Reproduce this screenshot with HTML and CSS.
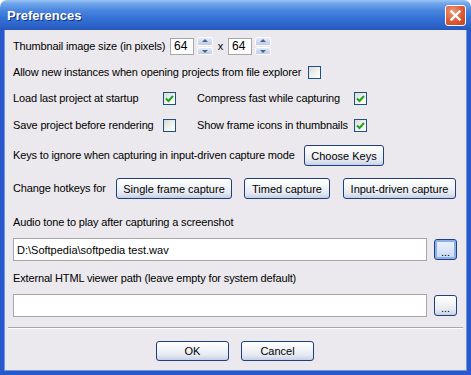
FILE: index.html
```html
<!DOCTYPE html>
<html lang="en">
<head>
    <meta charset="UTF-8">
    <title>Preferences</title>
    <link rel="stylesheet" href="styles.css">
</head>
<body>
    <div class="window">
        <div class="titlebar">
            <span class="title">Preferences</span>
            <span class="close">
                <svg width="11" height="11" viewBox="0 0 11 11"><path d="M1.5 1.5 L9.5 9.5 M9.5 1.5 L1.5 9.5" stroke="#fff" stroke-width="2.4" stroke-linecap="square"/></svg>
            </span>
        </div>

        <div class="content">
            <!-- thumbnail size -->
            <div class="row r1">
                <span class="lbl" style="width:157px">Thumbnail image size (in pixels)</span>
                <input class="num" type="text" value="64">
                <span class="spin"><span class="arr up"></span><span class="arr down"></span></span>
                <span class="times">x</span>
                <input class="num" type="text" value="64">
                <span class="spin"><span class="arr up"></span><span class="arr down"></span></span>
            </div>

            <div class="row r2">
                <span class="lbl" style="width:295px">Allow new instances when opening projects from file explorer</span>
                <span class="check"></span>
            </div>

            <div class="row r3">
                <span class="lbl" style="width:150px">Load last project at startup</span>
                <span class="check on"><svg width="9" height="8" viewBox="0 0 9 8"><path d="M1 3.5 L3.5 6 L8 1" fill="none" stroke="#21a121" stroke-width="2"/></svg></span>
                <span class="lbl" style="width:157px; margin-left:21px">Compress fast while capturing</span>
                <span class="check on"><svg width="9" height="8" viewBox="0 0 9 8"><path d="M1 3.5 L3.5 6 L8 1" fill="none" stroke="#21a121" stroke-width="2"/></svg></span>
            </div>

            <div class="row r3">
                <span class="lbl" style="width:150px">Save project before rendering</span>
                <span class="check"></span>
                <span class="lbl" style="width:157px; margin-left:21px">Show frame icons in thumbnails</span>
                <span class="check on"><svg width="9" height="8" viewBox="0 0 9 8"><path d="M1 3.5 L3.5 6 L8 1" fill="none" stroke="#21a121" stroke-width="2"/></svg></span>
            </div>

            <div class="row r5">
                <span class="lbl" style="width:291px">Keys to ignore when capturing in input-driven capture mode</span>
                <button class="btn" style="width:80px">Choose Keys</button>
            </div>

            <div class="row r5">
                <span class="lbl" style="width:103px">Change hotkeys for</span>
                <button class="btn" style="width:116px">Single frame capture</button>
                <button class="btn gap12" style="width:86px">Timed capture</button>
                <button class="btn gap13" style="width:113px">Input-driven capture</button>
            </div>

            <!-- paths -->
            <div class="field-label">Audio tone to play after capturing a screenshot</div>
            <div class="path-row">
                <input class="path" type="text" value="D:\Softpedia\softpedia test.wav">
                <button class="btn browse focus">...</button>
            </div>

            <div class="field-label">External HTML viewer path (leave empty for system default)</div>
            <div class="path-row">
                <input class="path" type="text" value="">
                <button class="btn browse">...</button>
            </div>

            <div class="separator"></div>

            <div class="actions">
                <button class="btn action">OK</button>
                <button class="btn action">Cancel</button>
            </div>
        </div>
    </div>
</body>
</html>
```

FILE: styles.css
```css
body {
    margin: 0;
    font-family: "Liberation Sans", Arial, sans-serif;
    font-size: 11px;
    letter-spacing: -0.15px;
    color: #000;
    background: #fff;
}

.window {
    width: 471px;
    height: 375px;
    display: flex;
    flex-direction: column;
}

.titlebar {
    height: 30px;
    flex: none;
    border-radius: 7px 7px 0 0;
    background: linear-gradient(#9cc4f3 0%, #6fa5eb 12%, #4a86df 35%, #3672d6 60%, #2c63c9 85%, #2657bb 100%);
    display: flex;
    align-items: center;
    justify-content: space-between;
    padding: 0 5px 0 7px;
}

.title {
    color: #fff;
    font-weight: bold;
    font-size: 13px;
    letter-spacing: 0;
    text-shadow: 1px 1px #12307a;
    padding-top: 1px;
}

.close {
    width: 19px;
    height: 19px;
    border: 1px solid #fff;
    border-radius: 3px;
    background: radial-gradient(circle at 35% 30%, #f09a78, #dc5a34 55%, #c2401c);
    display: flex;
    align-items: center;
    justify-content: center;
    margin-top: 1px;
}

.content {
    flex: 1;
    background: #ebe9ed;
    border: solid #2958cd;
    border-width: 0 4px 4px 4px;
    box-shadow: inset 1px 0 #6a97e8, inset -1px 0 #6a97e8, inset 0 -1px #6a97e8;
    padding: 3px 10px 0 9px;
}

.row {
    display: flex;
    align-items: center;
}

.r1, .r2 { height: 26px; }
.r3 { height: 27px; }
.r5 { height: 33px; }

.lbl {
    flex: none;
    white-space: nowrap;
    line-height: 13px;
}

.num {
    width: 24px;
    height: 17px;
    box-sizing: border-box;
    border: 1px solid #a7a6aa;
    background: #fff;
    font: inherit;
    font-size: 12px;
    padding: 0 0 0 3px;
    margin: 0;
    outline: none;
}

.spin {
    width: 16px;
    height: 18px;
    margin-left: 3px;
    display: flex;
    flex-direction: column;
    gap: 1px;
}

.arr {
    flex: 1;
    border-radius: 2px;
    border: 1px solid #fff;
    background: linear-gradient(#e4ecf8, #bccbe6);
    position: relative;
}

.arr::after {
    content: "";
    position: absolute;
    left: 4px;
    border-left: 3px solid transparent;
    border-right: 3px solid transparent;
}

.up::after {
    top: 1px;
    border-bottom: 3px solid #4d6185;
}

.down::after {
    top: 2px;
    border-top: 3px solid #4d6185;
}

.times {
    width: 15px;
    text-align: center;
}

.check {
    width: 13px;
    height: 13px;
    box-sizing: border-box;
    border: 1px solid #1c5180;
    background: linear-gradient(135deg, #dcdcd5, #f6f6f4 70%, #fff);
    display: flex;
    align-items: center;
    justify-content: center;
    flex: none;
}

.btn {
    height: 21px;
    box-sizing: border-box;
    border: 1px solid #1f3f7c;
    border-radius: 3px;
    background: linear-gradient(#ffffff 0%, #f5f6f8 35%, #e4e8f1 75%, #c5cfe5 100%);
    font: inherit;
    font-size: 11px;
    color: #000;
    padding: 0;
    margin: 0;
    flex: none;
}

.gap12 { margin-left: 12px; }
.gap13 { margin-left: 13px; }

.field-label {
    line-height: 14px;
    margin-top: 10px;
    margin-bottom: 9px;
}

.path-row {
    display: flex;
    align-items: center;
    height: 23px;
}

.path {
    width: 414px;
    height: 23px;
    box-sizing: border-box;
    border: 1px solid #a7a6aa;
    background: #fff;
    font: inherit;
    font-size: 11px;
    padding: 0 0 0 3px;
    margin: 0;
    outline: none;
}

.browse {
    width: 23px;
    margin-left: 7px;
    height: 21px;
    line-height: 10px;
    padding-top: 4px;
}

.browse.focus {
    box-shadow: inset 0 0 0 2px #8cb0ee;
    background: linear-gradient(#f0f5fe, #c9d8f4);
}

.separator {
    height: 1px;
    background: #a7a6aa;
    border-bottom: 1px solid #fff;
    margin: 10px -6px 0 -5px;
}

.actions {
    display: flex;
    justify-content: center;
    gap: 12px;
    margin-top: 12px;
}

.action {
    width: 73px;
    height: 20px;
}
```
